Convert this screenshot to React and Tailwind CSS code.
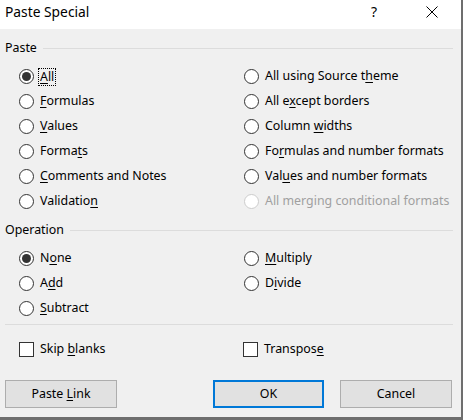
import React from "react";

// mnemonic letter: splits label at index and underlines one char
function Label({ text, at, disabled }) {
  if (at === undefined || at < 0) return <span>{text}</span>;
  return (
    <span className={disabled ? "text-[#a0a0a0]" : ""}>
      {text.slice(0, at)}
      <span className="underline decoration-1 underline-offset-[2px]">{text[at]}</span>
      {text.slice(at + 1)}
    </span>
  );
}

function Radio({ text, at, checked, disabled, focus }) {
  return (
    <div className="flex h-[25px] items-center">
      <span
        className={
          "flex h-[15px] w-[15px] shrink-0 items-center justify-center rounded-full border bg-white " +
          (disabled ? "border-[#cccccc]" : "border-[#333333]")
        }
      >
        {checked && <span className="h-[9px] w-[9px] rounded-full bg-[#333333]" />}
      </span>
      {focus ? (
        <span className="ml-[4px] border border-dotted border-black px-px leading-[16px]">
          <Label text={text} at={at} />
        </span>
      ) : (
        <span className={"ml-[6px] " + (disabled ? "text-[#a0a0a0]" : "")}>
          {disabled ? text : <Label text={text} at={at} />}
        </span>
      )}
    </div>
  );
}

function Check({ text, at }) {
  return (
    <div className="flex h-[24px] items-center">
      <span className="h-[15px] w-[15px] shrink-0 border border-[#333333] bg-white" />
      <span className="ml-[6px]">
        <Label text={text} at={at} />
      </span>
    </div>
  );
}

function GroupHeader({ title }) {
  return (
    <div className="flex h-[18px] items-center">
      <span>{title}</span>
      <span className="ml-[6px] mr-[3px] h-px flex-1 bg-[#dcdcdc]" />
    </div>
  );
}

export default function App() {
  const pasteLeft = [
    { text: "All", at: 0, checked: true, focus: true },
    { text: "Formulas", at: 0 },
    { text: "Values", at: 0 },
    { text: "Formats", at: 5 },
    { text: "Comments and Notes", at: 0 },
    { text: "Validation", at: 9 },
  ];
  const pasteRight = [
    { text: "All using Source theme", at: 18 },
    { text: "All except borders", at: 5 },
    { text: "Column widths", at: 7 },
    { text: "Formulas and number formats", at: 2 },
    { text: "Values and number formats", at: 3 },
    { text: "All merging conditional formats", disabled: true },
  ];

  return (
    <div
      className="flex h-[420px] w-[463px] flex-col border-b-[3px] border-r-2 border-[#6e6e6e] bg-[#f0f0f0] text-[12.4px] text-black"
      style={{ fontFamily: '"Noto Sans", "Open Sans", sans-serif' }}
    >
      {/* title bar */}
      <div className="flex h-[29px] shrink-0 items-center bg-white pb-[5px] pl-[5px]">
        <span className="text-[13.8px] leading-none">Paste Special</span>
        <span className="ml-auto text-[14px] leading-none">?</span>
        <svg className="ml-[49px] mr-[23px]" width="12" height="12" viewBox="0 0 12 12">
          <path d="M0.5 0.5 L11.5 11.5 M11.5 0.5 L0.5 11.5" stroke="#000" strokeWidth="1" />
        </svg>
      </div>

      <div className="flex flex-1 flex-col px-[5px]">
        <div className="mt-[10px]">
          <GroupHeader title="Paste" />
        </div>
        <div className="mt-[7px] grid grid-cols-[225px_1fr] pl-[14px]">
          <div className="flex flex-col">
            {pasteLeft.map((r) => (
              <Radio key={r.text} {...r} />
            ))}
          </div>
          <div className="flex flex-col">
            {pasteRight.map((r) => (
              <Radio key={r.text} {...r} />
            ))}
          </div>
        </div>

        <div className="mt-[7px]">
          <GroupHeader title="Operation" />
        </div>
        <div className="mt-[7px] grid grid-cols-[225px_1fr] pl-[14px]">
          <div className="flex flex-col">
            <Radio text="None" at={1} checked />
            <Radio text="Add" at={1} />
            <Radio text="Subtract" at={0} />
          </div>
          <div className="flex flex-col">
            <Radio text="Multiply" at={0} />
            <Radio text="Divide" at={1} />
          </div>
        </div>

        <div className="mr-[3px] mt-[3px] h-px bg-[#dcdcdc]" />

        <div className="mt-[12px] grid grid-cols-[224px_1fr] pl-[14px]">
          <Check text="Skip blanks" at={5} />
          <Check text="Transpose" at={8} />
        </div>

        <div className="mt-[19px] flex h-[28px] items-stretch">
          <button className="w-[112px] border border-[#adadad] bg-[#e1e1e1]">
            <Label text="Paste Link" at={6} />
          </button>
          <button className="ml-[96px] w-[111px] border-2 border-[#0078d7] bg-[#e1e1e1]">OK</button>
          <button className="ml-[16px] w-[112px] border border-[#adadad] bg-[#e1e1e1]">Cancel</button>
        </div>
      </div>
    </div>
  );
}
